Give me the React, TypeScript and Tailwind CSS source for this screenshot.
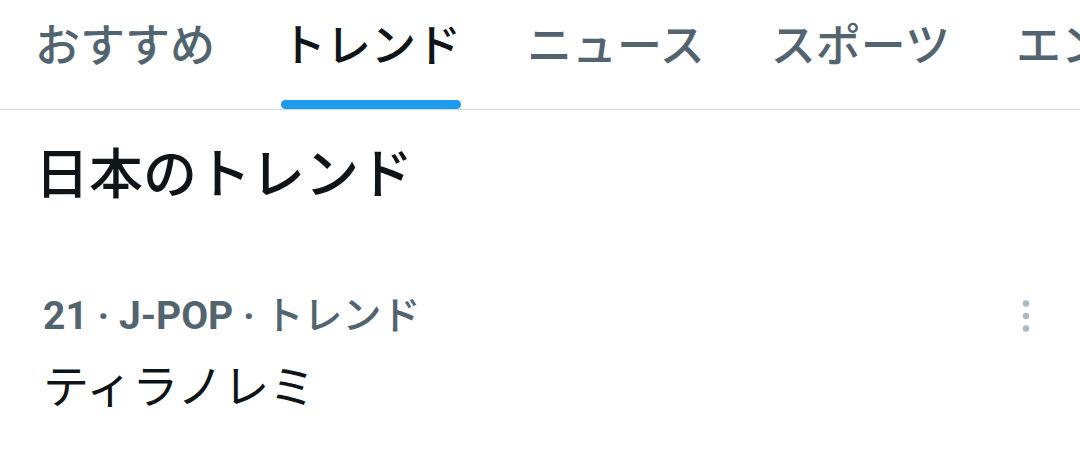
import React from 'react';

const tabs = ['おすすめ', 'トレンド', 'ニュース', 'スポーツ', 'エンタメ'];

const font = { fontFamily: 'Roboto, "Noto Sans CJK JP", sans-serif' };

const MoreIcon: React.FC = () => (
  <svg width="12" height="36" viewBox="0 0 12 36" className="fill-[#aab8c2]">
    <circle cx="6" cy="5.5" r="3.2" />
    <circle cx="6" cy="18" r="3.2" />
    <circle cx="6" cy="30.5" r="3.2" />
  </svg>
);

const App: React.FC = () => {
  const active = 1;
  return (
    <div className="w-[1080px] h-[468px] bg-white overflow-hidden" style={font}>
      <div className="flex border-b border-[#cfd9de] pl-[2px] whitespace-nowrap overflow-hidden">
        {tabs.map((t, i) => (
          <div key={t} className="shrink-0 px-[33px] flex flex-col">
            <span
              className={`pt-[25px] text-[45px] leading-[44px] font-medium ${
                i === active ? 'text-[#0f1419]' : 'text-[#536471]'
              }`}
            >
              {t}
            </span>
            <div
              className={`mt-[31px] h-[9px] rounded-full ${i === active ? 'bg-[#1d9bf0]' : 'bg-transparent'}`}
            />
          </div>
        ))}
      </div>

      <h2 className="pl-[35px] mt-[39px] text-[54px] leading-[54px] font-medium text-[#0f1419]">
        日本のトレンド
      </h2>

      <div className="mt-[94px] pl-[43px] pr-[48px] flex items-start justify-between">
        <div className="flex flex-col">
          <span className="text-[39px] leading-[39px] font-medium text-[#536471]">
            <span className="font-bold">21 · J-POP · </span>トレンド
          </span>
          <span className="mt-[28px] text-[46px] leading-[46px] text-[#0f1419]">ティラノレミ</span>
        </div>
        <div className="mt-[1px]">
          <MoreIcon />
        </div>
      </div>
    </div>
  );
};

export default App;
